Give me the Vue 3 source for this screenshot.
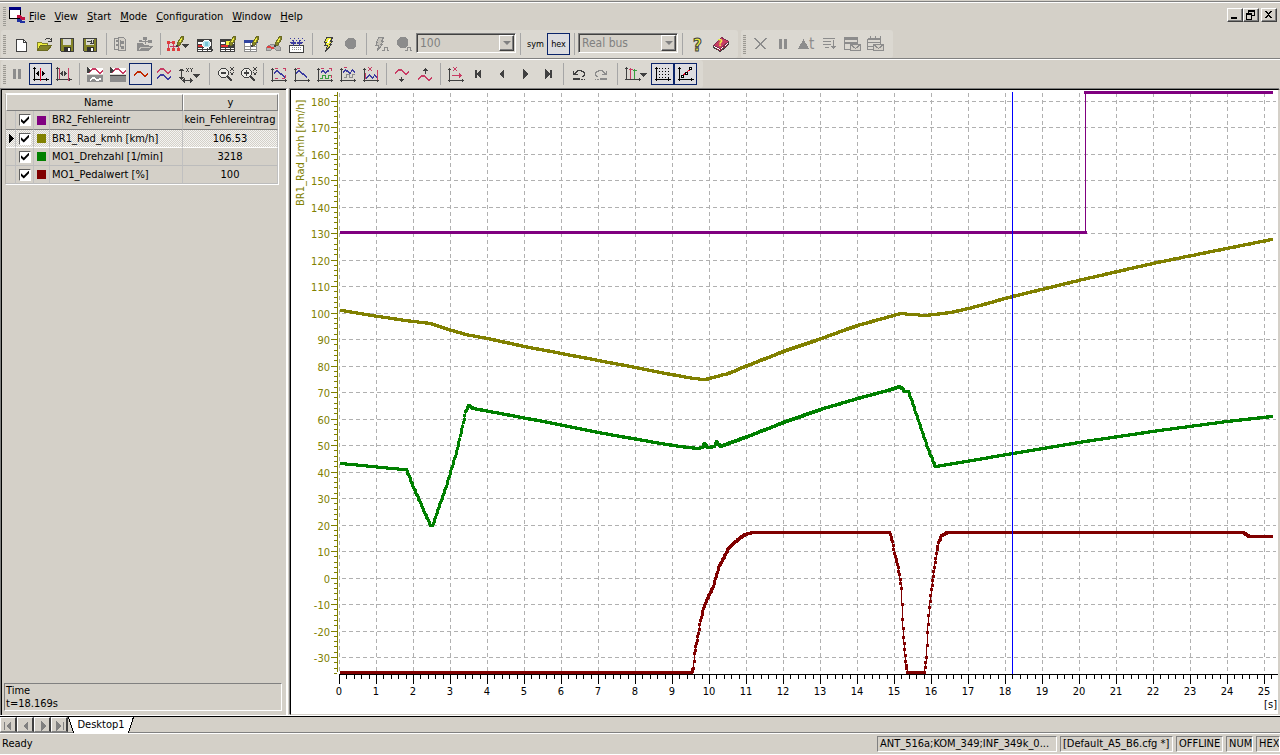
<script setup>
import { ref } from 'vue'

const D = '#404040', R = '#c83c64', B = '#3c3ca0', G = '#8c8c8c', Y = '#f0f040', O = '#848428', W = '#ffffff'

const s = (d, c) => ({ d, s: c })
const f = (d, c, o) => ({ d, f: c, s: o })

/* a stepped curve: one column per character, its digit is the drop from y */
const run = (x, y, c, offs, h = 2) => f([...offs].map((o, i) => `M${x + i} ${y + Number(o)}h1v${h}h-1z`).join(''), c)
const wave = (x, y, c) => run(x, y, c, '43211112345544'.slice(0, 13) + '3')
const diag = (x, y) => run(x, y, B, '21001233456')
const axes = s('M5.5 5v14M4 6.5h3M4 17.5h16M18.5 16v3', D)
const blackAxes = s('M5.5 4v14M4 5.5h3M4 16.5h16M17.5 15v3', '#000')
const pencil = [f('M13.5 12.5v-3l4-6h2v3l-4 6z', O, '#6a6a20'), s('M15.5 9.5l2-4', Y), f('M12 12h2v2h-2z', D)]
const grid = [f('M4 6h15v13h-15z', D), f('M5 9h4v2h-4zM10 9h4v2h-4zM15 9h3v2h-3zM5 15h4v1h-4zM10 15h4v1h-4zM15 15h3v1h-3zM5 17h4v1h-4zM10 17h4v1h-4zM15 17h3v1h-3z', W), f('M5 12h8v2h-8z', '#e03030')]
const bolt = (a, b) => f('M10.500 4.500h6l-2 4h2l-3 3h2l-6 7l2-6h-3l2-3h-2z', a, b)
const floppy = [f('M4.500 5.500h13v13h-12l-1-1z', O, D), f('M7 6h8v6h-8z', '#d8d8d0'), f('M8 14h7v5h-7z', '#303030'), f('M12 15h2v3h-2z', W)]
const lens = [f('M8.500 5.500h4l3 3v3l-3 3h-4l-3-3v-3z', '#ecebe6', D), f('M14 13h2v1h1v1h1v1h1v2h-2v-1h-1v-1h-1v-1h-1z', D)]
const dots = f('M17 4h1v1h-1zM20 4h1v1h-1zM18 5h2v2h-2zM17 7h1v1h-1zM20 7h1v1h-1zM17 9h1v1h-1zM20 9h1v1h-1zM18 10h2v2h-2z', D)
const pulse = (x, y, c) => s(`M${x} ${y + 3}.5h2v-3h3v3h3v-3h3`, c)
const corners = s('M8 5.500h3M16 5.500h3M18.500 5v3M18.500 12v3', R)

const icons = {
  new: [f('M6.500 6.500h7l3 3v9h-10z', W, D), s('M13.500 6.500v3h3', D)],
  open: [f('M4.500 17.500v-8h4l1 1h5v2', Y, O), f('M4.500 17.500l3-5h11l-4 5z', O, '#6a6a20'), f('M12 6h1v1h-1zM13 5h4v1h-4zM17 6h1v1h-1zM15 8h4v1h-4zM18 5h1v3h-1z', D)],
  save: floppy,
  saveAs: [...floppy, s('M8 8.500h5M12.500 7v4M14.500 7v4M11 10.500h3', D)],
  copyTree: [f('M4.500 5.500h5v11h-5z', 'none', G), f('M8.500 4.500h5l2 2v11h-7z', '#d4d0c8', G), f('M6 7h2v2h-2zM6 11h2v2h-2zM11 8h3v3h-3zM11 13h3v3h-3z', G), s('M10.500 7v7', G)],
  folderTree: [f('M4 10h5l2 2h5v1h4l-4 5h-12z', G), f('M6 7h3v2h-3zM10 4h4v3h-4zM15 7h4v3h-4z', G), s('M9 8.500h6M12.500 6v5', G), s('M6 16.500l2-2h9', '#c8c5be')],
  tree: [f('M3 8h3v3h-3zM8 8h3v3h-3zM3 15h3v3h-3zM8 15h3v3h-3zM13 15h3v3h-3z', '#e03c3c'), s('M4.500 11v4M6 9.500h2M9.500 11v4M6 13.500h8M14.500 13v2', R), ...pencil, f('M18 11h7l-3.500 4z', D)],
  search: [...grid, f('M11.500 7.500h4l2 2v3l-2 2h-4l-2-2v-3z', '#b4e4ee', W), f('M12 9h3v4h-3z', '#78c4d4'), f('M16 14h2v1h1v1h1v2h-2v-1h-1v-1h-1z', D)],
  tableEdit: [...grid, f('M10 8h5v4h-5z', Y), ...pencil],
  winEdit: [f('M5.500 7.500h12v11h-12z', W, G), f('M5 7h14v3h-14z', '#3044a0'), s('M6 13.500h12M6 16.500h12M11.500 10v8', G), ...pencil],
  gauge: [f('M4.500 17.500v-3l4-3h7l3 3v3h-4l-2-2h-2l-2 2z', '#b4b4b4', G), f('M5 13h4v2h-4zM9 14h3v2h-3z', '#e04040'), ...pencil],
  device: [f('M5 5h1v1h-1zM9 5h1v1h-1zM13 5h1v1h-1zM17 5h1v1h-1zM7 7h1v1h-1zM11 7h1v1h-1zM15 7h1v1h-1zM5 9h1v1h-1zM17 9h1v1h-1zM19 7h1v1h-1z', B), f('M4.500 12.500h14v7h-14z', W, D), f('M8 7h1v6h-1zM14 7h1v6h-1zM6 9h5v2h-5zM12 9h5v2h-5z', B), { d: 'M7 14.500h10M7 16.500h10', s: G, p: '1 1' }],
  bolt: [bolt(Y, D), s('M13.500 6.500l-2 4', W)],
  circle: [f('M9 5h5l3 3v5l-3 3h-5l-3-3v-5z', G)],
  boltPulse: [f('M8.500 4.500h5l-2 4h2l-3 3h2l-5 6l1-5h-3l2-3h-1z', '#c4c1ba', G), s('M12 17.500h2v-3h3v3h2', G)],
  circlePulse: [f('M7 4h5l3 3v5l-3 3h-5l-3-3v-5z', G), s('M12 17.500h2v-3h3v3h2', G)],
  help: [{ t: '?', x: 7, y: 18, c: Y, o: D, z: 17 }],
  book: [f('M4.500 12.500l8-8l7 4v3l-8 7l-7-4z', W, D), f('M4.500 12.500l8-8l7 4l-8 7z', R, '#803050'), { t: '?', x: 9, y: 13, c: Y, z: 9 }, s('M7 15.500l4 2l8-6', '#902840')],
  delete: [s('M5.500 5.500l11 11M6.500 5.500l11 11M16.500 5.500l-11 11M17.500 5.500l-11 11', G)],
  pause: [f('M7 6h3v10h-3zM12 6h3v10h-3z', G)],
  delta: [f('M3 16l5.500-10l5.500 10z', G), { t: 't', x: 14, y: 16, c: G, z: 15 }],
  list: [s('M5 5.500h12M5 8.500h8M5 11.500h8M7 14.500h4M15.500 7v9M13 13.500h5M14 14.500h3', G)],
  mail: [f('M3.500 4.500h13v12h-13z', 'none', G), f('M3 4h14v3h-14zM3 9h14v2h-14z', G), f('M9.500 11.500h10v6h-10z', '#d4d0c8', G), s('M9.500 11.500l5 4l5-4', G)],
  mailMulti: [f('M3.500 6.500h13v10h-13z', 'none', G), s('M4 5.500h12M6.500 3v3M11.500 3v3M16.500 3v3M4 9.500h12M4 13.500h5', G), f('M9.500 11.500h10v6h-10z', '#d4d0c8', G), s('M9.500 11.500l5 4l5-4', G)],
  pause2: [f('M7 6h3v10h-3zM12 6h3v10h-3z', G)],
  cursor: [blackAxes, s('M11.500 5v13', '#e00020'), f('M7 10h1v-1h1v-1h1v5h-1v-1h-1v-1h-1zM16 10h-1v-1h-1v-1h-1v5h1v-1h1v-1h1z', '#000')],
  cursors: [s('M5.500 4v14M4 5.500h3M4 16.500h16M17.500 15v3', D), s('M7.500 5v11M16.500 5v13', R), f('M8 10h1v-1h1v-1h1v5h-1v-1h-1v-1h-1zM15 10h-1v-1h-1v-1h-1v5h1v-1h1v-1h1z', D)],
  half: [f('M4 5h16v6h-16z', W), wave(6, 4, R), f('M4 12h16v7h-16z', G), run(7, 13, W, '32111233322'), f('M4 4h1v1h1v1h1v1h1v1h-1v1h-1v1h-2z', D)],
  halfTop: [f('M4 5h16v6h-16z', W), wave(6, 4, R), f('M4 12h16v7h-16z', G), s('M4 12.500h16', D), f('M4 4h1v1h1v1h1v1h1v1h-1v1h-1v1h-2z', D)],
  wave: [wave(5, 7, '#c02800')],
  waves: [wave(5, 4, R), wave(5, 10, B)],
  axesXY: [s('M6.500 6v11M4 7.500h5M5 6.500h3M4 14.500h5M5 15.500h3M7 17.500h11M9.500 15v5M8.500 16v3M15.500 15v5M16.500 16v3', D), f('M11 5h1v1h-1zM13 5h1v1h-1zM12 6h1v2h-1zM11 8h1v1h-1zM13 8h1v1h-1zM15 5h1v1h-1zM17 5h1v1h-1zM16 6h1v3h-1z', D), f('M18 11h7l-3.500 4z', D)],
  zoomOut: [...lens, f('M8 9h5v2h-5z', D), dots],
  zoomIn: [...lens, f('M8 9h5v2h-5zM10 7h1v6h-1z', D), dots],
  fit: [axes, corners, s('M8 15.500h3M15 15.500h3', R), diag(7, 7)],
  fitX: [axes, s('M7 5.500h3', R), diag(6, 7)],
  fitMulti: [axes, corners, run(8, 6, B, '21123211'), pulse(7, 12, '#38a040')],
  fitBlue: [axes, s('M8 4.500h3', R), run(7, 6, B, '210112331012'), pulse(8, 11, G)],
  fitRed: [axes, f('M9 4h1v1h-1zM12 4h1v1h-1zM10 5h2v2h-2zM9 7h1v1h-1zM12 7h1v1h-1z', R), s('M6.500 10v6M18.500 7v10', R), run(7, 11, B, '32101232012')],
  waveDown: [wave(5, 5, R), f('M11 14h1v2h2v1h-1v1h-1v1h-1v-1h-1v-1h-1v-1h2z', D)],
  waveUp: [wave(5, 11, R), f('M12 5h1v1h1v1h1v1h-2v3h-1v-3h-2v-1h1v-1h1z', D)],
  axesX: [axes, f('M9 4h1v1h-1zM12 4h1v1h-1zM10 5h2v2h-2zM9 7h1v1h-1zM12 7h1v1h-1z', R), f('M8 12h7v-2h1v1h1v1h1v1h-1v1h-1v1h-1v-2h-7z', R)],
  first: [f('M8 7h2v8h-2zM14 6v10l-5-5z', D)],
  prev: [f('M14 6v10l-5-5z', D)],
  next: [f('M10 6v10l5-5z', D)],
  last: [f('M9 6v10l5-5zM14 7h2v8h-2z', D)],
  undo: [f('M6 8h1v2h1v-1h1v-1h1v-1h5v1h2v1h1v4h-1v1h-2v-1h1v-1h1v-2h-1v-1h-2v-1h-3v1h-1v1h-1v1h2v1h-5z', D), f('M6 15h7v2h-7zM14 16h2v1h-2zM17 16h1v1h-1z', D)],
  redo: [f('M17 8h-1v2h-1v-1h-1v-1h-1v-1h-5v1h-2v1h-1v4h1v1h2v-1h-1v-1h-1v-2h1v-1h2v-1h3v1h1v1h1v1h-2v1h5z', G), f('M10 15h7v2h-7zM7 16h2v1h-2zM5 16h1v1h-1z', G)],
  axesMulti: [s('M5.500 4v13M4 5.500h3M4 16.500h16M18.500 15v3', D), s('M9.500 5v11M8 6.500h4', R), s('M13.500 6v10M12 7.500h4', '#38a040'), f('M19 10h7l-3.500 4z', D)],
  gridDots: [blackAxes, { d: 'M8 5.500h12M8 8.500h12M8 11.500h12M8 14.500h12', s: '#000', p: '1 2' }],
  points: [blackAxes, s('M7 14l11-9', '#e00020'), f('M7.500 12.500h2v2h-2zM11.500 9.500h2v2h-2zM15.500 4.500h2v2h-2z', W, '#000')]
}

const split = (str) => str.split(' ').map((n) => (n === '|' ? null : n))
const mainBar = split('new open save saveAs | copyTree folderTree | tree search tableEdit winEdit gauge device | bolt circle | boltPulse circlePulse')
const sendBar = split('delete pause delta list mail mailMulti')
const viewBar = split('pause2 cursor cursors | half halfTop wave waves axesXY | zoomOut zoomIn | fit fitX fitMulti fitBlue fitRed | waveDown waveUp | axesX first prev next last | undo redo | axesMulti gridDots points')
const wide = { tree: 'wide29', axesXY: 'wide30', axesMulti: 'wide30' }
const pressed = ['cursor', 'wave', 'gridDots', 'points']

const menus = ['File', 'View', 'Start', 'Mode', 'Configuration', 'Window', 'Help']

const signals = ref([
  { name: 'BR2_Fehlereintr', y: 'kein_Fehlereintrag', cls: 'purple', on: true },
  { name: 'BR1_Rad_kmh [km/h]', y: '106.53', cls: 'olive', on: true, sel: true },
  { name: 'MO1_Drehzahl [1/min]', y: '3218', cls: 'green', on: true },
  { name: 'MO1_Pedalwert [%]', y: '100', cls: 'maroon', on: true }
])

/* chart geometry */
const X0 = 339, DX = 37, Y0 = 578, DY = 2.65
const xTicks = Array.from({ length: 26 }, (_, i) => ({ v: i, x: X0 + i * DX }))
const yTicks = Array.from({ length: 22 }, (_, i) => ({ v: i * 10 - 30, y: Math.floor(Y0 - (i * 10 - 30) * DY) })).filter((t) => t.y > 92)
const xMinor = Array.from({ length: 127 }, (_, i) => `M${Math.round(X0 + i * 7.4)}.5 675v4`).join('')
const yMinor = Array.from({ length: 110 }, (_, i) => Math.floor(Y0 - (i * 2 - 36) * DY)).filter((y) => y > 92).map((y) => `M334 ${y}.5h3`).join('')

const traces = [
  { c: '#800080', p: [[341, 232], [1085, 232]] },
  { c: '#800080', p: [[1085, 92], [1271, 92]] },
  { c: '#808000', p: [[341, 310], [378, 316], [405, 320], [430, 323], [445, 328], [465, 334], [487, 338], [524, 346], [561, 353], [598, 360], [635, 367], [660, 372], [693, 378], [705, 379], [720, 375], [728, 373], [747, 365], [783, 351], [815, 340], [857, 325], [886, 317], [900, 313], [912, 314], [925, 315], [950, 312], [972, 307], [1012, 296], [1078, 280], [1152, 263], [1226, 248], [1271, 239]] },
  { c: '#008000', p: [[341, 463], [402, 469], [406, 469], [413, 487], [422, 507], [430, 525], [432, 525], [438, 508], [445, 488], [451, 468], [457, 448], [462, 426], [465, 411], [468, 405], [473, 408], [548, 422], [598, 432], [660, 443], [680, 446], [697, 448], [702, 447], [704, 443], [707, 447], [714, 446], [716, 441], [720, 446], [728, 443], [747, 436], [783, 422], [820, 409], [857, 398], [887, 390], [899, 386], [902, 388], [904, 391], [908, 391], [913, 405], [927, 447], [933, 462], [935, 466], [960, 462], [1012, 453], [1078, 442], [1152, 431], [1226, 421], [1271, 416]] },
  { c: '#800000', p: [[341, 672], [691, 672], [693, 668], [694, 653], [696, 643], [698, 633], [700, 620], [703, 608], [707, 598], [712, 588], [715, 578], [719, 565], [723, 558], [728, 548], [733, 543], [740, 537], [745, 534], [752, 532], [889, 532], [892, 541], [894, 553], [897, 564], [899, 574], [901, 588], [902, 619], [903, 637], [904, 649], [905, 661], [907, 672], [924, 672], [926, 657], [927, 632], [929, 607], [931, 589], [932, 580], [934, 567], [936, 553], [938, 542], [941, 535], [947, 532], [1243, 532], [1249, 536], [1271, 536]] }
].map((t) => {
  let marks = ''
  for (let i = 0; i < t.p.length - 1; i++) {
    const [ax, ay] = t.p[i], [bx, by] = t.p[i + 1]
    const n = Math.ceil((bx - ax) / 0.75)
    for (let k = 0; k <= n; k++) {
      marks += `M${Math.round(ax + ((bx - ax) * k) / n) - 1} ${Math.round(ay + ((by - ay) * k) / n) - 1}h3v3h-3z`
    }
  }
  return { c: t.c, marks, line: t.p.map(([x, y]) => `${x + 0.5},${y + 0.5}`).join(' ') }
})
</script>

<template>
  <div class="app">
    <nav class="menubar">
      <i class="grip"></i>
      <svg class="logo" width="17" height="16" viewBox="0 0 17 16">
        <path d="M.5 1.500h11v10h-11z" fill="#fff" stroke="#000" />
        <path d="M0 0h12v3h-12z" fill="#000080" />
        <path d="M8 9.500h1v-1h2v1h1v1h1v1h2v-1h1" fill="none" stroke="#c01040" stroke-width="2" />
        <path d="M8 13.500h1v-1h2v1h1v1h1v1h2v-1h1" fill="none" stroke="#2030a0" stroke-width="2" />
      </svg>
      <button v-for="m in menus" :key="m" class="menu"><u>{{ m[0] }}</u>{{ m.slice(1) }}</button>
      <div class="winbtns">
        <button aria-label="Minimize"><svg width="14" height="12"><path d="M3 8h6v2h-6z" /></svg></button>
        <button aria-label="Restore"><svg width="14" height="12"><path d="M4 1h7v6h-3v4h-6v-7h2zM5 3v1h3v2h2v-3zM3 6v4h4v-4z" fill-rule="evenodd" /></svg></button>
        <button class="close" aria-label="Close"><svg width="14" height="12"><path d="M3 2h2v1h1v1h1v-1h1v-1h2v1h-1v1h-1v1h-1v1h1v1h1v1h1v1h-2v-1h-1v-1h-1v1h-1v1h-2v-1h1v-1h1v-1h1v-1h-1v-1h-1v-1h-1z" /></svg></button>
      </div>
    </nav>

    <div class="bars">
      <div class="toolbar first">
        <i class="grip"></i>
        <template v-for="(n, i) in mainBar" :key="i">
          <i v-if="!n" class="sep"></i>
          <button v-else class="tool" :class="wide[n]" :aria-label="n">
            <svg width="29" height="22"><template v-for="(p, k) in icons[n]" :key="k"><path :d="p.d" :fill="p.f || 'none'" :stroke="p.s || 'none'" :stroke-dasharray="p.p" /></template></svg>
          </button>
        </template>
        <span class="combo"><select aria-label="Cycle" disabled><option>100</option></select><b></b></span>
        <i class="sep"></i>
        <button class="tool txt">sym</button>
        <button class="tool txt pressed">hex</button>
        <i class="sep"></i>
        <span class="combo"><select aria-label="Bus" disabled><option>Real bus</option></select><b></b></span>
        <i class="sep"></i>
        <button v-for="n in ['help', 'book']" :key="n" class="tool" :aria-label="n">
          <svg width="23" height="22">
            <template v-for="(p, k) in icons[n]" :key="k">
              <text v-if="p.t" :x="p.x" :y="p.y" :font-size="p.z" :fill="p.c" :stroke="p.o || 'none'" class="bold">{{ p.t }}</text>
              <path v-else :d="p.d" :fill="p.f || 'none'" :stroke="p.s || 'none'" />
            </template>
          </svg>
        </button>
      </div>
      <div class="toolbar">
        <i class="grip"></i>
        <button v-for="n in sendBar" :key="n" class="tool" :aria-label="n">
          <svg width="23" height="22">
            <template v-for="(p, k) in icons[n]" :key="k">
              <text v-if="p.t" :x="p.x" :y="p.y" :font-size="p.z" :fill="p.c">{{ p.t }}</text>
              <path v-else :d="p.d" :fill="p.f || 'none'" :stroke="p.s || 'none'" />
            </template>
          </svg>
        </button>
      </div>
    </div>

    <div class="bars second">
      <div class="toolbar view">
        <i class="grip"></i>
        <template v-for="(n, i) in viewBar" :key="i">
          <i v-if="!n" class="sep"></i>
          <button v-else class="tool" :class="[wide[n], { pressed: pressed.includes(n) }]" :aria-label="n">
            <svg width="29" height="22">
              <template v-for="(p, k) in icons[n]" :key="k">
                <path :d="p.d" :fill="p.f || 'none'" :stroke="p.s || 'none'" :stroke-dasharray="p.p" />
              </template>
            </svg>
          </button>
        </template>
      </div>
    </div>

    <main class="work">
      <aside class="side">
        <table>
          <colgroup><col class="c1" /><col class="c2" /><col class="c3" /><col class="c4" /><col /></colgroup>
          <thead><tr><th colspan="4" class="hname">Name</th><th>y</th></tr></thead>
          <tbody>
            <tr v-for="(r, i) in signals" :key="r.name" :class="{ sel: r.sel }">
              <td><svg v-if="r.sel" width="6" height="9"><path d="M0 0l5 4.500l-5 4.500z" /></svg></td>
              <td><input :id="'sig' + i" v-model="r.on" type="checkbox" /></td>
              <td><i class="swatch" :class="r.cls"></i></td>
              <td class="name"><label :for="'sig' + i">{{ r.name }}</label></td>
              <td class="val">{{ r.y }}</td>
            </tr>
          </tbody>
        </table>
        <div class="time">Time<br />t=18.169s</div>
      </aside>

      <section class="plot">
        <svg viewBox="291 90 987 623" preserveAspectRatio="xMinYMin meet">
          <g class="grid">
            <path v-for="t in yTicks" :key="t.v" :d="`M342 ${t.y}.5H1276`" />
            <path v-for="t in xTicks" :key="t.v" :d="`M${t.x}.5 93V674`" />
          </g>
          <path class="yaxis" d="M337.500 92V672" />
          <path class="yaxis" :d="yMinor" />
          <path v-for="t in yTicks" :key="t.v" class="yaxis" :d="`M331 ${t.y}.5h6`" />
          <text v-for="t in yTicks" :key="'l' + t.v" class="ylab" x="330" :y="t.y + 5">{{ t.v }}</text>
          <text class="ytitle" transform="translate(304 206) rotate(-90)">BR1_Rad_kmh [km/h]</text>

          <path class="xaxis" d="M339 674.500H1278" />
          <path class="xaxis" :d="xMinor" />
          <path v-for="t in xTicks" :key="t.v" class="xaxis" :d="`M${t.x}.5 675v9`" />
          <text v-for="t in xTicks" :key="'x' + t.v" class="xlab" :x="t.x" y="695">{{ t.v }}</text>
          <text class="xunit" x="1277" y="708">[s]</text>

          <path d="M1085.500 93V232" stroke="#800080" />
          <g v-for="(t, i) in traces" :key="i">
            <polyline :points="t.line" fill="none" :stroke="t.c" />
            <path :d="t.marks" :fill="t.c" />
          </g>
          <path d="M1012.500 92V674" stroke="#0000ff" />
        </svg>
      </section>
    </main>

    <div class="tabs">
      <button v-for="(d, i) in ['M3 4h1v8h-1zM10 3v10l-5-5z', 'M10 3v10l-5-5z', 'M6 3v10l5-5z', 'M4 3v10l5-5zM11 4h1v8h-1z']" :key="i" class="navbtn" :aria-label="'Tab navigation ' + (i + 1)">
        <svg width="15" height="15"><path :d="d" fill="#808080" /></svg>
      </button>
      <button class="tab">
        <svg width="66" height="17"><path d="M0 0h65l-5 16h-55z" fill="#fff" /><path d="M.5 0l5 16M65.500 0l-5 16" stroke="#000" fill="none" /></svg>
        <span>Desktop1</span>
      </button>
    </div>

    <footer class="status">
      <span class="ready">Ready</span>
      <span class="pane p1">ANT_516a;KOM_349;INF_349k_0...</span>
      <span class="pane p2">[Default_A5_B6.cfg *]</span>
      <span class="pane p3">OFFLINE</span>
      <span class="pane p4">NUM</span>
      <span class="pane p5">HEX</span>
    </footer>
  </div>
</template>

<style>
body { margin: 0; background: #d4d0c8; overflow: hidden; }
</style>

<style scoped>
* { box-sizing: border-box; }
.app {
  height: 100vh; display: flex; flex-direction: column; background: #d4d0c8; color: #000;
  font: 11px/14px "DejaVu Sans Condensed", "Liberation Sans", sans-serif;
}
button { font: inherit; color: inherit; background: none; border: 0; padding: 0; margin: 0; white-space: nowrap; }
svg { display: block; shape-rendering: crispEdges; }
.menubar { display: flex; align-items: center; height: 30px; flex: none; padding: 2px 3px 0; box-shadow: inset 0 1px #d4d0c8, inset 0 2px #808080, inset 0 3px #fff; }
.grip { width: 3px; height: 19px; flex: none; background: repeating-linear-gradient(#9c9a94 0 1px, #d4d0c8 1px 2px); }
.logo { margin: 0 -1px 2px 3px; }
.menu { padding: 2px 4px 0; height: 20px; }
.menu:nth-of-type(n + 2) { padding-left: 5px; }
.winbtns { margin: 0 0 2px auto; display: flex; }
.winbtns button { width: 16px; height: 14px; border: 1px solid; border-color: #fff #404040 #404040 #fff; box-shadow: inset -1px -1px #808080; }
.winbtns .close { margin-left: 2px; }

.bars { display: flex; gap: 3px; height: 28px; flex: none; padding-left: 1px; }
.bars.second { height: 30px; border-top: 1px solid #808080; box-shadow: inset 0 1px #fff; padding-top: 1px; }
.toolbar { display: flex; align-items: center; background: #dbd8d1; border-radius: 3px; padding: 0 6px 0 2px; }
.toolbar .grip { margin-right: 3px; }
.toolbar.first .grip { margin-right: 4px; }
.toolbar.view .grip { margin-right: 0; }
.tool { width: 23px; height: 22px; flex: none; position: relative; overflow: hidden; }
.tool svg { overflow: visible; }
.wide29 { width: 29px; }
.wide30 { width: 30px; }
.pressed { background: #dcdce0; box-shadow: inset 0 0 0 1px #0a246a; }
.txt { font-size: 9px; }
.bold { font-weight: bold; }
.sep { width: 8px; height: 22px; flex: none; background: linear-gradient(#a6a6a6, #a6a6a6) 4px 0 / 1px 22px no-repeat; }
.combo { position: relative; width: 100px; height: 20px; margin-bottom: 2px; flex: none; }
.combo select { appearance: none; width: 100px; height: 20px; font: inherit; font-size: 12px; color: #808080; opacity: 1; background: #d4d0c8; border: 1px solid; border-color: #808080 #fff #fff #808080; box-shadow: inset 1px 1px #404040; border-radius: 0; padding: 0 3px; }
.combo b { position: absolute; right: 2px; top: 2px; width: 15px; height: 16px; border: 1px solid; border-color: #fff #404040 #404040 #fff; box-shadow: inset -1px -1px #808080; pointer-events: none; }
.combo b::after { content: ""; position: absolute; left: 3px; top: 5px; border: 4px solid transparent; border-top-color: #808080; border-bottom: 0; }

.work { flex: 1; min-height: 0; display: flex; gap: 2px; border-bottom: 1px solid #fff; }
.side { width: 288px; flex: none; display: flex; flex-direction: column; padding: 4px 4px 4px 3px; border-top: 1px solid #808080; border-left: 1px solid #808080; border-right: 2px solid #fff; box-shadow: inset 1px 1px #000; }
table { width: 274px; margin-left: 1px; border-collapse: separate; border-spacing: 0; table-layout: fixed; border: 1px solid #fff; border-left-color: #b8b5ae; }
.c1 { width: 10px; }
.c2 { width: 18px; }
.c3 { width: 16px; }
.c4 { width: 133px; }
th { height: 17px; padding: 0; font-weight: normal; line-height: 14px; border: 1px solid; border-color: #fff #808080 #808080 #fff; }
.hname { padding-left: 8px; }
td { height: 18px; padding: 0; line-height: 14px; border-right: 1px solid #c0c0c0; border-bottom: 1px solid #bcbcbc; }
tbody tr:first-child td { height: 19px; border-bottom-color: #808080; }
tr.sel td { border-bottom-color: #fff; background: repeating-conic-gradient(#d4d0c8 0 25%, #f4f4f2 0 50%) 0 0 / 2px 2px; }
td svg { margin-left: 3px; }
td input { appearance: none; display: block; width: 12px; height: 12px; margin: 0 0 0 3px; background: #fff; border: 1px solid; border-color: #606060 #fff #fff #606060; position: relative; }
td input:checked::before { content: ""; position: absolute; left: 1px; top: 1px; width: 8px; height: 8px; background: #000; clip-path: polygon(0 35%, 35% 65%, 100% 0, 100% 35%, 35% 100%, 0 70%); }
.swatch { display: block; width: 9px; height: 9px; margin-left: 3px; }
.purple { background: #800080; }
.olive { background: #808000; }
.green { background: #008000; }
.maroon { background: #800000; }
.name { padding-left: 2px; }
.val { text-align: center; white-space: nowrap; }
.time { margin-top: auto; width: 278px; height: 28px; line-height: 13px; border: 1px solid; border-color: #808080 #fff #fff #808080; padding-left: 1px; white-space: nowrap; }

.plot { flex: 1; min-width: 0; margin-top: 1px; background: #fff; border: 1px solid #000; border-bottom-color: #d4d0c8; border-right: 2px solid #d4d0c8; box-shadow: -1px -1px #808080; overflow: hidden; }
.plot svg { width: 100%; height: 100%; }
.plot text { font-size: 11px; }
.grid { stroke: #b0b0b0; stroke-dasharray: 4 3; }
.yaxis { stroke: #808000; }
.xaxis { stroke: #000; }
.ylab { fill: #808000; text-anchor: end; }
.ytitle { fill: #808000; }
.xlab { text-anchor: middle; }
.xunit { text-anchor: end; }

.tabs { display: flex; height: 17px; flex: none; border-top: 1px solid #000; box-shadow: inset 0 -1px #808080; }
.navbtn { width: 17px; height: 15px; border: 1px solid; border-color: #fff #808080 #808080 #fff; border-right: 2px solid #404040; overflow: hidden; }
.tab { position: relative; width: 66px; height: 16px; }
.tab svg { position: absolute; left: 0; top: 0; }
.tab span { position: relative; }
.status { display: flex; align-items: center; height: 22px; flex: none; border-top: 1px solid #fff; border-bottom: 1px solid #fff; }
.ready { margin-right: auto; padding-left: 2px; }
.pane { height: 16px; line-height: 14px; margin-left: 3px; padding-left: 2px; border: 1px solid; border-color: #808080 #fff #fff #808080; white-space: nowrap; overflow: hidden; }
.p1 { width: 180px; }
.p2 { width: 113px; }
.p3 { width: 47px; }
.p4 { width: 27px; }
.p5 { width: 24px; }
</style>
